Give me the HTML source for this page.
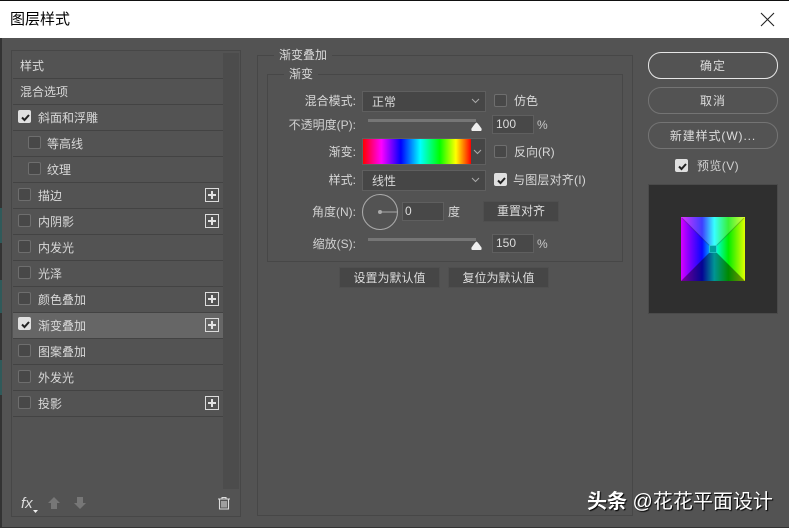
<!DOCTYPE html>
<html><head><meta charset="utf-8"><style>
html,body{margin:0;padding:0;width:789px;height:528px;overflow:hidden;background:#535353}
body{position:relative;font-family:"Liberation Sans","Noto Sans CJK SC",sans-serif;font-size:12px;color:#d8d8d8}
div,span{position:absolute;box-sizing:border-box;white-space:nowrap}
.t{line-height:16px;height:16px}
.r{text-align:right}
.row{left:13px;width:210px;height:26px;background:#535353;border-bottom:1px solid #434343}
.cb{width:13px;height:13px;border:1px solid #6e6e6e;border-radius:2px;background:#484848}
.cb.on{background:#e0e0e0;border-color:#e0e0e0}
.cb svg{position:absolute;left:1px;top:1px}
.plus{left:205px;width:14px;height:14px;border:1px solid #dcdcdc}
.plus:before{content:"";position:absolute;left:2px;top:5px;width:8px;height:2px;background:#e2e2e2}
.plus:after{content:"";position:absolute;left:5px;top:2px;width:2px;height:8px;background:#e2e2e2}
.box{border:1px solid #474747}
.sel{background:#464646;border:1px solid #5f5f5f;height:21px}
.arr{position:absolute;right:5px;top:6px}
.inp{background:#484848;border:1px solid #5f5f5f;height:19px;line-height:17px;padding-left:2px;font-size:12px;color:#dcdcdc}
.btn{background:#464646;border:1px solid #4f4f4f;height:21px;line-height:19px;text-align:center;color:#dcdcdc;border-radius:1px}
.pill{left:648px;width:130px;height:27px;border:1px solid #747474;border-radius:13px;text-align:center;line-height:26px;color:#dcdcdc;letter-spacing:1px}
.sl{left:368px;width:108px;height:3px;background:#767676}
</style></head><body>
<div style="left:0;top:0;width:789px;height:1px;background:#111"></div>
<div style="left:0;top:1px;width:789px;height:37px;background:#fff"></div>
<div style="left:0;top:38px;width:2px;height:490px;background:#333"></div>
<div style="left:0;top:208px;width:2px;height:35px;background:#2f5a5a"></div>
<div style="left:0;top:280px;width:2px;height:33px;background:#2f5a5a"></div>
<div style="left:0;top:360px;width:2px;height:35px;background:#2f5a5a"></div>
<div style="left:0;top:527px;width:789px;height:1px;background:#333"></div>
<div class="t" style="left:10px;top:10px;height:20px;line-height:20px;font-size:15px;color:#000">图层样式</div>
<svg style="position:absolute;left:760px;top:12px" width="15" height="15"><path d="M1 1L14 14M14 1L1 14" stroke="#222" stroke-width="1.1" fill="none"/></svg>

<div class="box" style="left:11px;top:50px;width:230px;height:467px"></div>
<div style="left:223px;top:53px;width:16px;height:436px;background:#4c4c4c"></div>

<div class="row" style="top:53px"></div>
<div class="row" style="top:79px"></div>
<div class="row" style="top:105px"></div>
<div class="row" style="top:131px"></div>
<div class="row" style="top:157px"></div>
<div class="row" style="top:183px"></div>
<div class="row" style="top:209px"></div>
<div class="row" style="top:235px"></div>
<div class="row" style="top:261px"></div>
<div class="row" style="top:287px"></div>
<div class="row" style="top:313px;background:#666"></div>
<div class="row" style="top:339px"></div>
<div class="row" style="top:365px"></div>
<div class="row" style="top:391px"></div>

<div class="t" style="left:20px;top:58px">样式</div>
<div class="t" style="left:20px;top:84px">混合选项</div>
<div class="cb on" style="left:18px;top:110px"><svg width="11" height="11"><path d="M2 5.500L4.500 8L9 3" stroke="#222" stroke-width="2" fill="none"/></svg></div>
<div class="t" style="left:38px;top:110px">斜面和浮雕</div>
<div class="cb" style="left:28px;top:136px"></div><div class="t" style="left:47px;top:136px">等高线</div>
<div class="cb" style="left:28px;top:162px"></div><div class="t" style="left:47px;top:162px">纹理</div>
<div class="cb" style="left:18px;top:188px"></div><div class="t" style="left:38px;top:188px">描边</div>
<div class="plus" style="top:188px"></div>
<div class="cb" style="left:18px;top:214px"></div><div class="t" style="left:38px;top:214px">内阴影</div>
<div class="plus" style="top:214px"></div>
<div class="cb" style="left:18px;top:240px"></div><div class="t" style="left:38px;top:240px">内发光</div>
<div class="cb" style="left:18px;top:266px"></div><div class="t" style="left:38px;top:266px">光泽</div>
<div class="cb" style="left:18px;top:292px"></div><div class="t" style="left:38px;top:292px">颜色叠加</div>
<div class="plus" style="top:292px"></div>
<div class="cb on" style="left:18px;top:317px"><svg width="11" height="11"><path d="M2 5.500L4.500 8L9 3" stroke="#222" stroke-width="2" fill="none"/></svg></div>
<div class="t" style="left:38px;top:318px">渐变叠加</div>
<div class="plus" style="top:318px"></div>
<div class="cb" style="left:18px;top:344px"></div><div class="t" style="left:38px;top:344px">图案叠加</div>
<div class="cb" style="left:18px;top:370px"></div><div class="t" style="left:38px;top:370px">外发光</div>
<div class="cb" style="left:18px;top:396px"></div><div class="t" style="left:38px;top:396px">投影</div>
<div class="plus" style="top:396px"></div>

<div class="t" style="left:21px;top:495px;font:italic 15px 'Liberation Sans',sans-serif;color:#ddd">fx</div>
<svg style="position:absolute;left:33px;top:510px" width="6" height="4"><path d="M0 0H5L2.500 3Z" fill="#eee"/></svg>
<svg style="position:absolute;left:47px;top:496px" width="14" height="14"><path d="M7 1L13 7H10V13H4V7H1Z" fill="#777"/></svg>
<svg style="position:absolute;left:73px;top:496px" width="14" height="14"><path d="M4 1H10V7H13L7 13L1 7H4Z" fill="#777"/></svg>
<svg style="position:absolute;left:217px;top:496px" width="14" height="14"><path d="M1 3H13M5 3V1.500H9V3M2.500 3.500V13H11.500V3.500M5 5V11.500M7 5V11.500M9 5V11.500" stroke="#ddd" stroke-width="1.100" fill="none"/></svg>

<div class="box" style="left:257px;top:55px;width:376px;height:461px"></div>
<div class="t" style="left:274px;top:47px;padding:0 5px;background:#535353">渐变叠加</div>
<div class="box" style="left:267px;top:74px;width:356px;height:188px"></div>
<div class="t" style="left:284px;top:66px;padding:0 5px;background:#535353">渐变</div>

<div class="t r" style="left:290px;top:93px;width:66px">混合模式:</div>
<div class="sel" style="left:362px;top:91px;width:124px"><span class="t" style="left:9px;top:2px">正常</span><svg class="arr" width="9" height="6"><path d="M1 1L4.500 4.500L8 1" stroke="#aaa" fill="none"/></svg></div>
<div class="cb" style="left:494px;top:94px"></div><div class="t" style="left:514px;top:93px">仿色</div>

<div class="t r" style="left:280px;top:117px;width:76px;color:#d0d0d0">不透明度(P):</div>
<div class="sl" style="top:119px"></div>
<svg style="position:absolute;left:470px;top:121px" width="13" height="11"><path d="M6.500 1.500Q7.500 2 9 4L11.500 7.500Q12 10 10.500 10H2.500Q1 10 1.500 7.500L4 4Q5.500 2 6.500 1.500Z" fill="#eee"/></svg>
<div class="inp" style="left:492px;top:115px;width:42px;padding-left:3px">100</div>
<div class="t" style="left:537px;top:117px;font-size:12px;color:#c8c8c8">%</div>

<div class="t r" style="left:290px;top:144px;width:66px">渐变:</div>
<div style="left:362px;top:138px;width:124px;height:27px;background:#464646;border:1px solid #5f5f5f"><svg class="arr" style="top:10px;right:3px" width="9" height="6"><path d="M1 1L4.500 4.500L8 1" stroke="#aaa" fill="none"/></svg></div>
<div style="left:363px;top:139px;width:108px;height:25px;background:linear-gradient(90deg,#f00 0,#f0f 17%,#00f 35%,#0ff 53%,#0f0 71%,#ff0 86%,#f00 100%)"></div>
<div class="cb" style="left:494px;top:145px"></div><div class="t" style="left:514px;top:144px">反向(R)</div>

<div class="t r" style="left:290px;top:172px;width:66px">样式:</div>
<div class="sel" style="left:362px;top:170px;width:124px"><span class="t" style="left:9px;top:2px">线性</span><svg class="arr" width="9" height="6"><path d="M1 1L4.500 4.500L8 1" stroke="#aaa" fill="none"/></svg></div>
<div class="cb on" style="left:494px;top:173px"><svg width="11" height="11"><path d="M2 5.500L4.500 8L9 3" stroke="#222" stroke-width="2" fill="none"/></svg></div>
<div class="t" style="left:513px;top:172px;letter-spacing:.2px">与图层对齐(I)</div>

<div class="t r" style="left:290px;top:204px;width:66px;color:#d0d0d0">角度(N):</div>
<svg style="position:absolute;left:361px;top:193px" width="38" height="38"><circle cx="19" cy="19" r="17.500" fill="#535353" stroke="#a8a8a8" stroke-width="1.100"/><path d="M19 19H36" stroke="#999" stroke-width="1.200"/><circle cx="19" cy="19" r="2" fill="#aaa"/></svg>
<div class="inp" style="left:402px;top:202px;width:42px">0</div>
<div class="t" style="left:448px;top:204px">度</div>
<div class="btn" style="left:483px;top:201px;width:76px">重置对齐</div>

<div class="t r" style="left:290px;top:236px;width:66px;color:#d0d0d0">缩放(S):</div>
<div class="sl" style="top:238px"></div>
<svg style="position:absolute;left:470px;top:240px" width="13" height="11"><path d="M6.500 1.500Q7.500 2 9 4L11.500 7.500Q12 10 10.500 10H2.500Q1 10 1.500 7.500L4 4Q5.500 2 6.500 1.500Z" fill="#eee"/></svg>
<div class="inp" style="left:492px;top:234px;width:42px;padding-left:3px">150</div>
<div class="t" style="left:537px;top:236px;font-size:12px;color:#c8c8c8">%</div>

<div class="btn" style="left:339px;top:267px;width:101px;line-height:20px">设置为默认值</div>
<div class="btn" style="left:448px;top:267px;width:101px;line-height:20px">复位为默认值</div>

<div class="pill" style="top:52px;border-color:#e6e6e6">确定</div>
<div class="pill" style="top:87px">取消</div>
<div class="pill" style="top:122px;letter-spacing:.9px">新建样式(W)...</div>
<div class="cb on" style="left:675px;top:159px"><svg width="11" height="11"><path d="M2 5.500L4.500 8L9 3" stroke="#222" stroke-width="2" fill="none"/></svg></div>
<div class="t" style="left:697px;top:158px;color:#d0d0d0;letter-spacing:.4px">预览(V)</div>

<div style="left:648px;top:184px;width:130px;height:130px;background:#2f2f2f;border:1px solid #4a4a4a"></div>
<svg style="position:absolute;left:681px;top:217px" width="64" height="64">
<defs><linearGradient id="g"><stop offset="0" stop-color="#d800ff"/><stop offset=".12" stop-color="#8800ff"/><stop offset=".33" stop-color="#0808ff"/><stop offset=".52" stop-color="#00ffff"/><stop offset=".74" stop-color="#00ee00"/><stop offset="1" stop-color="#e0ff00"/></linearGradient></defs>
<rect width="64" height="64" fill="url(#g)"/>
<path d="M0 0H64L35 29H29Z" fill="#fff" opacity=".22"/>
<path d="M0 64H64L35 35H29Z" fill="#000" opacity=".42"/>
<path d="M1 1L29 29M63 1L35 29" stroke="#000" stroke-opacity=".22" stroke-width="1" fill="none"/>
<rect x="28.500" y="28.500" width="7" height="7" fill="#00a0a0" stroke="#40e0e0" stroke-opacity=".5"/>
</svg>

<div style="left:587px;top:489px;height:26px;line-height:26px;font-size:20px;color:#fff;font-weight:normal;text-shadow:1px 1px 1px #000"><b>头条</b> @花花平面设计</div>
</body></html>
